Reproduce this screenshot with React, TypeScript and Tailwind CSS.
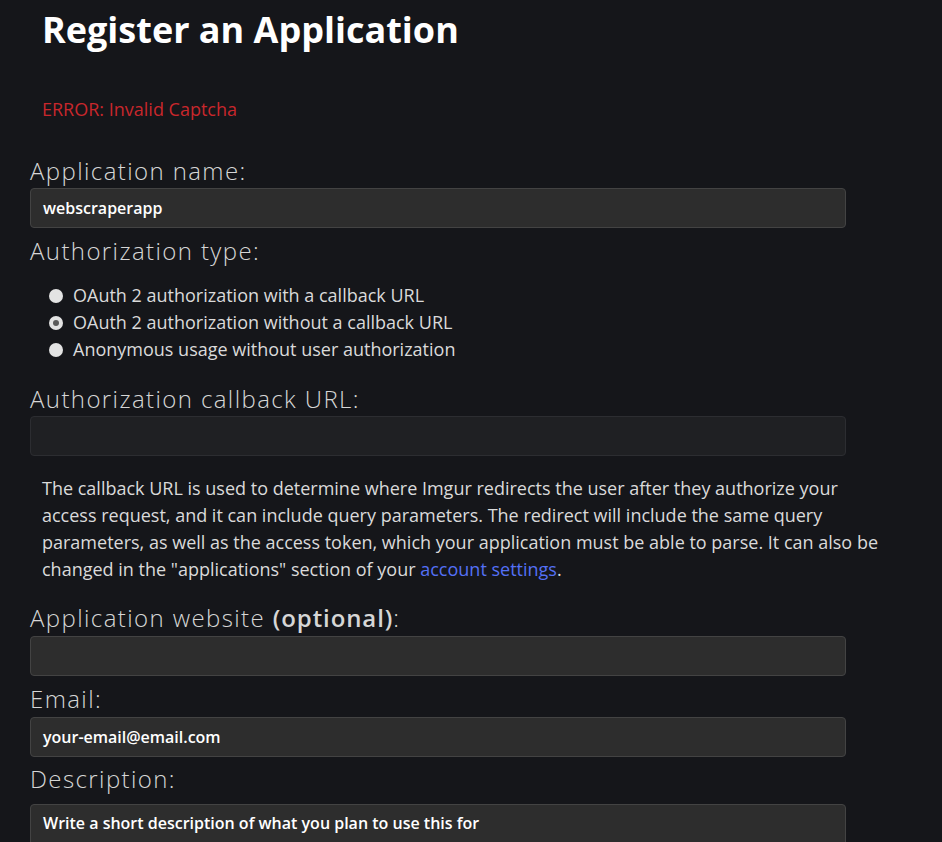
const labelCls = 'h-[34px] text-[24px] leading-[34px] font-light tracking-[1.4px] text-[#d6d6d6]';
const inputCls =
    'flex h-[40px] w-[816px] items-center rounded-[4px] border border-[#434343] bg-[#2d2d2d] pl-[12px] text-[16px] font-semibold text-white';

function Radio({ checked, label }: { checked?: boolean; label: string }) {
    return (
        <div className="flex h-[27px] items-center">
            <span className="ml-[19px] mr-[10px] flex h-[14px] w-[14px] items-center justify-center rounded-full bg-[#e3e3e3]">
                {checked && <span className="h-[6px] w-[6px] rounded-full bg-[#5a5a5a]" />}
            </span>
            <span>{label}</span>
        </div>
    );
}

export default function App() {
    return (
        <div
            className="min-h-screen bg-[#15161a] text-[18px] text-[#dadada]"
            style={{ fontFamily: '"Open Sans", sans-serif' }}
        >
            <div className="flex flex-col pl-[30px]">
                {/* Title + error */}
                <h1 className="ml-[12px] pt-[10px] text-[36px] leading-[40px] font-bold text-white">
                    Register an Application
                </h1>
                <p className="ml-[12px] mt-[47px] h-[24px] leading-[24px] text-[#c8272c]">ERROR: Invalid Captcha</p>

                <label className={`${labelCls} mt-[33px]`}>Application name:</label>
                <div className={inputCls}>webscraperapp</div>

                <label className={`${labelCls} mt-[6px]`}>Authorization type:</label>
                <div className="mt-[14px] flex flex-col">
                    <Radio label="OAuth 2 authorization with a callback URL" />
                    <Radio checked label="OAuth 2 authorization without a callback URL" />
                    <Radio label="Anonymous usage without user authorization" />
                </div>

                <label className={`${labelCls} mt-[19px]`}>Authorization callback URL:</label>
                <div className="h-[40px] w-[816px] rounded-[4px] border border-[#2c2d31] bg-[#1f2023]" />

                <p className="ml-[12px] mt-[19px] w-[846px] leading-[27px]">
                    The callback URL is used to determine where Imgur redirects the user after they authorize your
                    access request, and it can include query parameters. The redirect will include the same query
                    parameters, as well as the access token, which your application must be able to parse. It can also
                    be changed in the "applications" section of your{' '}
                    <a className="text-[#5470f5]">account settings</a>.
                </p>

                <label className={`${labelCls} mt-[18px]`}>
                    Application website <span className="font-semibold tracking-[0.9px]">(optional)</span>:
                </label>
                <div className={`${inputCls} mt-[1px]`} />

                <label className={`${labelCls} mt-[6px]`}>Email:</label>
                <div className={`${inputCls} mt-[1px]`}>your-email@email.com</div>

                <label className={`${labelCls} mt-[5px]`}>Description:</label>
                <div className="mt-[8px] h-[80px] w-[816px] rounded-[4px] border border-[#434343] bg-[#2d2d2d] pl-[12px] pt-[7px] text-[16px] leading-[22px] font-semibold text-white">
                    Write a short description of what you plan to use this for
                </div>
            </div>
        </div>
    );
}
